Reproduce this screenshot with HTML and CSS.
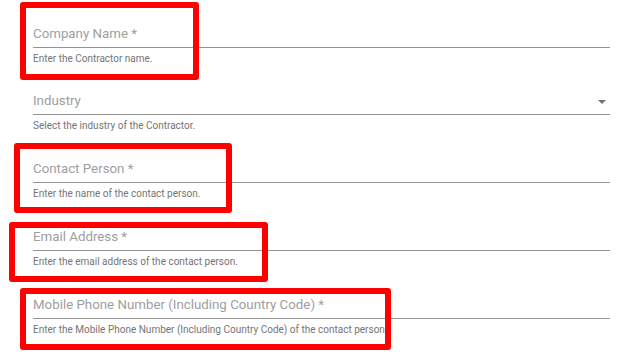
FILE: index.html
```html
<!DOCTYPE html>
<html>
<head>
<meta charset="utf-8">
<link rel="stylesheet" href="styles.css">
</head>
<body>
<div class="form">
  <div class="field">
    <div class="control"><span class="label">Company Name *</span></div>
    <div class="helper">Enter the Contractor name.</div>
  </div>
  <div class="field">
    <div class="control"><span class="label">Industry</span><span class="arrow"></span></div>
    <div class="helper">Select the industry of the Contractor.</div>
  </div>
  <div class="field">
    <div class="control"><span class="label">Contact Person *</span></div>
    <div class="helper">Enter the name of the contact person.</div>
  </div>
  <div class="field">
    <div class="control"><span class="label">Email Address *</span></div>
    <div class="helper">Enter the email address of the contact person.</div>
  </div>
  <div class="field">
    <div class="control"><span class="label">Mobile Phone Number (Including Country Code) *</span></div>
    <div class="helper">Enter the Mobile Phone Number (Including Country Code) of the contact person</div>
  </div>
  <div class="mark mark-1"></div>
  <div class="mark mark-3"></div>
  <div class="mark mark-4"></div>
  <div class="mark mark-5"></div>
</div>
</body>
</html>
```
FILE: styles.css
```css
html, body {
  margin: 0;
  padding: 0;
  background: #ffffff;
}
body {
  font-family: Roboto, "Liberation Sans", sans-serif;
  width: 621px;
  height: 364px;
  overflow: hidden;
}
.form {
  position: relative;
  padding-left: 33px;
  width: 577px;
  display: flex;
  flex-direction: column;
}
.field {
  height: 68px;
  flex: none;
  box-sizing: border-box;
  padding-top: 25px;
}
.field:first-child {
  padding-top: 26px;
}
.control {
  display: flex;
  justify-content: space-between;
  align-items: center;
  height: 16px;
  padding-bottom: 5px;
  border-bottom: 1px solid #949494;
}
.label {
  font-size: 13.3px;
  line-height: 16px;
  color: #9e9e9e;
  white-space: nowrap;
}
.arrow {
  width: 0;
  height: 0;
  border-left: 4px solid transparent;
  border-right: 4px solid transparent;
  border-top: 4px solid #757575;
  margin-right: 4px;
  margin-top: 1px;
}
.helper {
  margin-top: 5px;
  font-size: 10px;
  line-height: 12px;
  color: #757575;
  white-space: nowrap;
}
.mark {
  position: absolute;
  box-sizing: border-box;
  border: 6px solid #ff0000;
  border-radius: 3px;
}
.mark-1 { left: 20px; top: 2px; width: 179px; height: 78px; }
.mark-3 { left: 14px; top: 143px; width: 218px; height: 70px; }
.mark-4 { left: 9px; top: 222px; width: 259px; height: 60px; }
.mark-5 { left: 20px; top: 288px; width: 371px; height: 62px; }
```
